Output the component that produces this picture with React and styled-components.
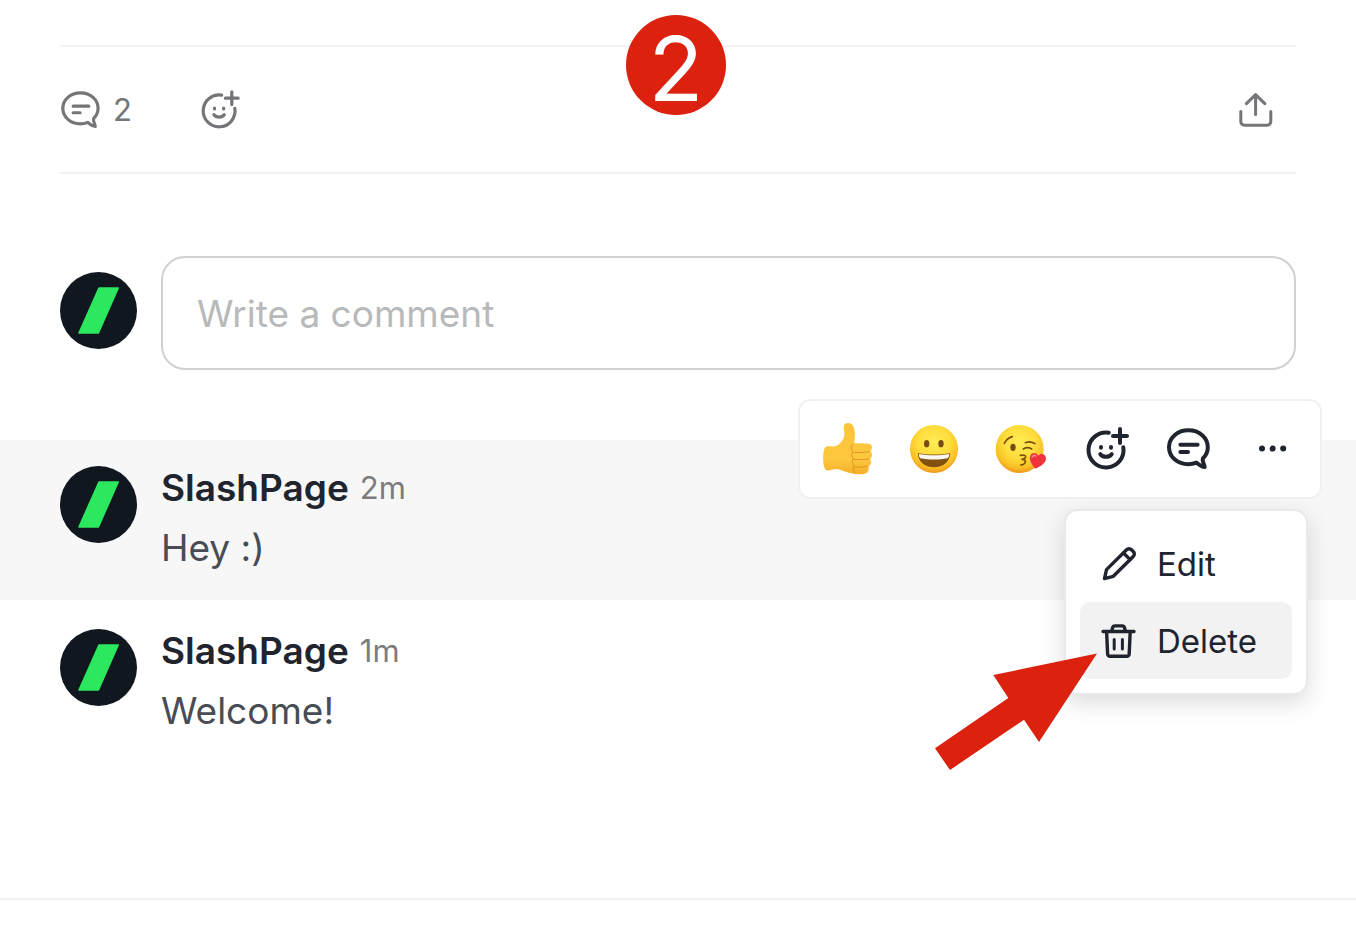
import { styled, createGlobalStyle } from 'styled-components';

const GlobalStyle = createGlobalStyle`
    * {
        box-sizing: border-box;
    }

    body {
        margin: 0;
        background-color: #FFFFFF;
        color: #20242E;
        font-family: Inter, "Liberation Sans", sans-serif;
    }

    button, input {
        font-family: inherit;
        color: inherit;
    }

    svg {
        display: block;
        flex: none;
        overflow: visible;
    }
`;

const Page = styled.main`
    padding-top: 45px;
    padding-bottom: 40px;
`;

const ActionBar = styled.section`
    position: relative;
    display: flex;
    align-items: center;
    height: 129px;
    margin: 0 60px;
    padding: 0 20px 0 1px;
    border-top: 2px solid #F2F2F2;
    border-bottom: 2px solid #F2F2F2;
`;

const ActionButton = styled.button`
    display: flex;
    align-items: center;
    gap: 12px;
    padding: 0;
    border: none;
    background-color: transparent;
    color: #737578;
    font-size: 31px;
    line-height: 40px;
    cursor: pointer;
    margin-left: ${({ $push }) => $push || '0'};
`;

const StepBadge = styled.div`
    position: absolute;
    top: -32px;
    left: 50%;
    margin-left: -52px;
    width: 100px;
    height: 100px;
    border-radius: 50%;
    background-color: #DC210F;
    color: #FFFFFF;
    font-size: 90px;
    line-height: 107px;
    text-align: center;
`;

const Composer = styled.form`
    display: flex;
    align-items: flex-start;
    gap: 24px;
    margin: 82px 60px 70px;
`;

const CommentInput = styled.input`
    flex: 1;
    min-width: 0;
    height: 114px;
    padding: 0 34px;
    border: 2px solid #CFD0D1;
    border-radius: 24px;
    background-color: #FFFFFF;
    font-size: 37px;
    outline: none;

    &::placeholder {
        color: #B8B9BA;
        opacity: 1;
    }
`;

const AvatarSvg = styled.svg`
    width: 77px;
    height: 77px;
    margin-top: ${({ $top }) => $top};
`;

const CommentList = styled.ul`
    display: flex;
    flex-direction: column;
    gap: 3px;
    margin: 0;
    padding: 0 0 135px;
    border-bottom: 2px solid #F2F2F2;
    list-style: none;
`;

const CommentItem = styled.li`
    position: relative;
    display: flex;
    align-items: flex-start;
    gap: 24px;
    padding: 18px 60px 22px;
    background-color: ${({ $active }) => ($active ? '#F7F7F7' : 'transparent')};
`;

const CommentHeader = styled.div`
    display: flex;
    align-items: center;
    gap: 11px;
    line-height: 60px;
`;

const Author = styled.span`
    font-size: 37px;
    font-weight: 600;
`;

const Time = styled.time`
    color: #7B7C7E;
    font-size: 31px;
`;

const CommentText = styled.p`
    margin: 0;
    color: #484C54;
    font-size: 37px;
    line-height: 60px;
`;

const Toolbar = styled.div`
    position: absolute;
    top: -41px;
    right: 34px;
    display: flex;
    align-items: center;
    gap: 36px;
    height: 100px;
    padding: 0 23px;
    border: 2px solid #F1F1F3;
    border-radius: 12px;
    background-color: #FFFFFF;
`;

const ToolGroup = styled.div`
    display: flex;
    gap: ${({ $gap }) => $gap};
`;

const ToolButton = styled.button`
    display: flex;
    align-items: center;
    justify-content: center;
    width: ${({ $width }) => $width};
    height: 52px;
    padding: 0;
    border: none;
    background-color: transparent;
    cursor: pointer;
`;

const Menu = styled.div`
    position: absolute;
    top: 69px;
    right: 48px;
    z-index: 1;
    width: 244px;
    padding: 14px;
    border: 2px solid #E9E9E9;
    border-radius: 14px;
    background-color: #FFFFFF;
    box-shadow: 0 8px 24px rgba(0, 0, 0, 0.14);
`;

const MenuItem = styled.button`
    display: flex;
    align-items: center;
    gap: 20px;
    width: 100%;
    height: 77px;
    padding: 0 21px;
    border: none;
    border-radius: 10px;
    background-color: ${({ $hovered }) => ($hovered ? '#F2F2F2' : 'transparent')};
    font-size: 33px;
    cursor: pointer;
`;

const Pointer = styled.svg`
    position: absolute;
    top: 142px;
    right: 209px;
    width: 162px;
    height: 118px;
    pointer-events: none;
`;

const Avatar = ({ top }) => (
    <AvatarSvg viewBox="0 0 77 77" $top={top} aria-hidden="true">
        <circle cx="38.5" cy="38.5" r="38.5" fill="#10171F" />
        <path
            d="M39 16h19.2L38.4 61H19z"
            fill="#2BE85F"
            stroke="#2BE85F"
            strokeWidth="1.6"
            strokeLinejoin="round"
        />
    </AvatarSvg>
);

const LineIcon = ({ size, box = 44, weight = 4, children }) => (
    <svg
        width={size}
        height={size}
        viewBox={`0 0 ${box} ${box}`}
        fill="none"
        stroke="currentColor"
        strokeWidth={weight}
        strokeLinecap="round"
        strokeLinejoin="round"
        aria-hidden="true"
    >
        {children}
    </svg>
);

const BubbleIcon = (props) => (
    <LineIcon {...props}>
        <path d="M29.4 35.6C27 36.6 24.2 37.2 21.4 37.2 10.4 37.2 2 29.7 2 20.2S10.4 3.2 21.4 3.2s19.4 7.5 19.4 17c0 4.5-1.8 8.2-4.8 11.1-1.2 2.4 1 5.4 1.7 8.8-3.5-.2-5.3-2.2-8.3-4.5z" />
        <path d="M13.4 17.8h17.2M13.4 25h7.6" />
    </LineIcon>
);

const FacePlusIcon = (props) => (
    <LineIcon {...props}>
        <path d="M23.8 5.7A17.5 17.5 0 1 0 38.3 20.2" />
        <path d="M35 2v14M28 9h14M15.3 27.2c2.6 3.4 8.8 3.4 11.4 0M16 20v.8M26 20v.8" />
    </LineIcon>
);

const ShareIcon = () => (
    <LineIcon size={40} box={40} weight={3}>
        <path d="M19.6 4.6v20M10.4 13.6l9.2-9 9.2 9M4.8 21.4v10.2a3.6 3.6 0 0 0 3.6 3.6h22.8a3.6 3.6 0 0 0 3.6-3.6V21.4" />
    </LineIcon>
);

const DotsIcon = () => (
    <svg width="44" height="44" viewBox="0 0 44 44" fill="#20242E" aria-hidden="true">
        <circle cx="13" cy="21.6" r="3" />
        <circle cx="23.6" cy="21.6" r="3" />
        <circle cx="34.2" cy="21.6" r="3" />
    </svg>
);

const PencilIcon = () => (
    <LineIcon size={36} box={36} weight={3.4}>
        <path d="M3.5 32.6l2-9L25.3 4c1.7-1.7 3.7-1.7 5.4 0L32 5.3c1.8 1.7 1.8 3.7 0 5.4L12.3 30.3z" />
        <path d="M22.5 7l6.6 6.6" />
    </LineIcon>
);

const TrashIcon = () => (
    <LineIcon size={36} box={36} weight={3.4}>
        <path d="M2 8.5h31M5.6 8.5l1 22.4a2.4 2.4 0 0 0 2.4 2.4h16.8a2.4 2.4 0 0 0 2.4-2.4l1-22.4M10.6 8.5l1-3.8a2.4 2.4 0 0 1 2.3-1.8h7.3a2.4 2.4 0 0 1 2.3 1.8l1 3.8" />
        <path d="M13.2 16.4v9.6M21.4 16.4v9.6" strokeWidth="3" />
    </LineIcon>
);

const FaceGradient = ({ id }) => (
    <radialGradient id={id} cx="0.5" cy="0.36" r="0.66">
        <stop offset="0" stopColor="#FFEC55" />
        <stop offset="0.5" stopColor="#FFDD3C" />
        <stop offset="0.8" stopColor="#FAC025" />
        <stop offset="1" stopColor="#EE8F1C" />
    </radialGradient>
);

const ThumbEmoji = () => (
    <svg width="50" height="52" viewBox="99 99 150 156" aria-hidden="true">
        <defs>
            <linearGradient id="thumb" x1="0" y1="0" x2="0" y2="1">
                <stop offset="0" stopColor="#FCC53A" />
                <stop offset="0.7" stopColor="#FDC73E" />
                <stop offset="1" stopColor="#F4B02B" />
            </linearGradient>
        </defs>
        <path
            d="M107 171c9-4 20 0 31-3 12-5 22-18 25-31 2-10-4-22 0-31 4-10 20-9 26 1 9 17 5 37 4 53 14-1 34 0 43 1 12 2 13 18 4 23 9 5 8 19-1 23 7 6 5 18-4 22 4 8 0 19-10 22-12 3-31 2-44-2-16-3-30-11-44-12-10 0-22 7-29 3-11-8-11-62-1-69z"
            fill="url(#thumb)"
        />
        <path
            d="M188 163c-7 7-5 18 2 23-7 5-6 16 1 20-6 5-5 15 1 20-5 6-4 16 3 21M190 187c15 1 33 1 48-2M191 208c16 1 32 1 46-1M192 230c14 2 28 2 40-1"
            fill="none"
            stroke="#DE951F"
            strokeWidth="3"
            strokeLinecap="round"
        />
    </svg>
);

const GrinEmoji = () => (
    <svg width="50" height="52" viewBox="357 99 150 156" aria-hidden="true">
        <defs>
            <FaceGradient id="grin" />
        </defs>
        <circle cx="432" cy="177" r="72" fill="url(#grin)" />
        <ellipse cx="410" cy="161" rx="8" ry="11" fill="#764A12" />
        <ellipse cx="453" cy="161" rx="8" ry="11" fill="#764A12" />
        <path d="M384 190c30 5 66 5 96 0 1 24-20 42-48 42s-49-18-48-42z" fill="#82500F" />
        <path d="M387 192c28 5 62 5 90 0 1 5-1 10-4 13-25 5-57 5-82 0-3-3-5-8-4-13z" fill="#FAF8F2" />
    </svg>
);

const KissEmoji = () => (
    <svg width="50" height="52" viewBox="615 99 150 156" aria-hidden="true">
        <defs>
            <FaceGradient id="kiss" />
        </defs>
        <circle cx="689" cy="177" r="72" fill="url(#kiss)" />
        <ellipse cx="669" cy="172" rx="8" ry="11" fill="#764A12" />
        <path
            d="M643 160c5-10 13-17 24-20M706 158c10-4 20-3 29 3M700 177c8-5 17-5 25 0M691 196c9-2 17 0 16 5-1 4-7 6-11 7 6 0 11 3 10 8-1 6-9 9-14 9"
            fill="none"
            stroke="#80500F"
            strokeWidth="5"
            strokeLinecap="round"
            strokeLinejoin="round"
        />
        <path
            d="M736 236c-10-12-20-27-15-39 5-11 19-10 24 0 8-9 21-5 23 7 1 14-16 26-32 32z"
            fill="#F0323C"
        />
        <path d="M727 201c2-5 7-6 10-3" fill="none" stroke="#FF8A8A" strokeWidth="5" strokeLinecap="round" />
    </svg>
);

const Comment = ({ author, time, text, active, children }) => (
    <CommentItem $active={active}>
        <Avatar top="8px" />
        <div>
            <CommentHeader>
                <Author>{author}</Author>
                <Time>{time}</Time>
            </CommentHeader>
            <CommentText>{text}</CommentText>
        </div>
        {children}
    </CommentItem>
);

export default function App() {
    return (
        <Page>
            <GlobalStyle />
            <ActionBar>
                <ActionButton type="button" aria-label="Comments">
                    <BubbleIcon size={40} weight={3.5} />
                    2
                </ActionButton>
                <ActionButton type="button" aria-label="Add reaction" $push="68px">
                    <FacePlusIcon size={40} weight={3.5} />
                </ActionButton>
                <ActionButton type="button" aria-label="Share" $push="auto">
                    <ShareIcon />
                </ActionButton>
                <StepBadge>2</StepBadge>
            </ActionBar>

            <Composer>
                <Avatar top="16px" />
                <CommentInput type="text" placeholder="Write a comment" aria-label="Write a comment" />
            </Composer>

            <CommentList>
                <Comment author="SlashPage" time="2m" text="Hey :)" active>
                    <Toolbar>
                        <ToolGroup $gap="36px">
                            <ToolButton type="button" aria-label="Thumbs up" $width="50px">
                                <ThumbEmoji />
                            </ToolButton>
                            <ToolButton type="button" aria-label="Grin" $width="50px">
                                <GrinEmoji />
                            </ToolButton>
                            <ToolButton type="button" aria-label="Kiss" $width="50px">
                                <KissEmoji />
                            </ToolButton>
                        </ToolGroup>
                        <ToolGroup $gap="30px">
                            <ToolButton type="button" aria-label="Add reaction" $width="52px">
                                <FacePlusIcon size={44} />
                            </ToolButton>
                            <ToolButton type="button" aria-label="Reply" $width="52px">
                                <BubbleIcon size={44} />
                            </ToolButton>
                            <ToolButton type="button" aria-label="More" $width="52px">
                                <DotsIcon />
                            </ToolButton>
                        </ToolGroup>
                    </Toolbar>
                    <Menu>
                        <MenuItem type="button">
                            <PencilIcon />
                            Edit
                        </MenuItem>
                        <MenuItem type="button" $hovered>
                            <TrashIcon />
                            Delete
                        </MenuItem>
                        <Pointer viewBox="0 0 162 118" aria-hidden="true">
                            <path d="M162 .5L58.3 22l15 23L0 95.3 15 117l74-50.3L104 89z" fill="#DC210F" />
                        </Pointer>
                    </Menu>
                </Comment>
                <Comment author="SlashPage" time="1m" text="Welcome!" />
            </CommentList>
        </Page>
    );
}
